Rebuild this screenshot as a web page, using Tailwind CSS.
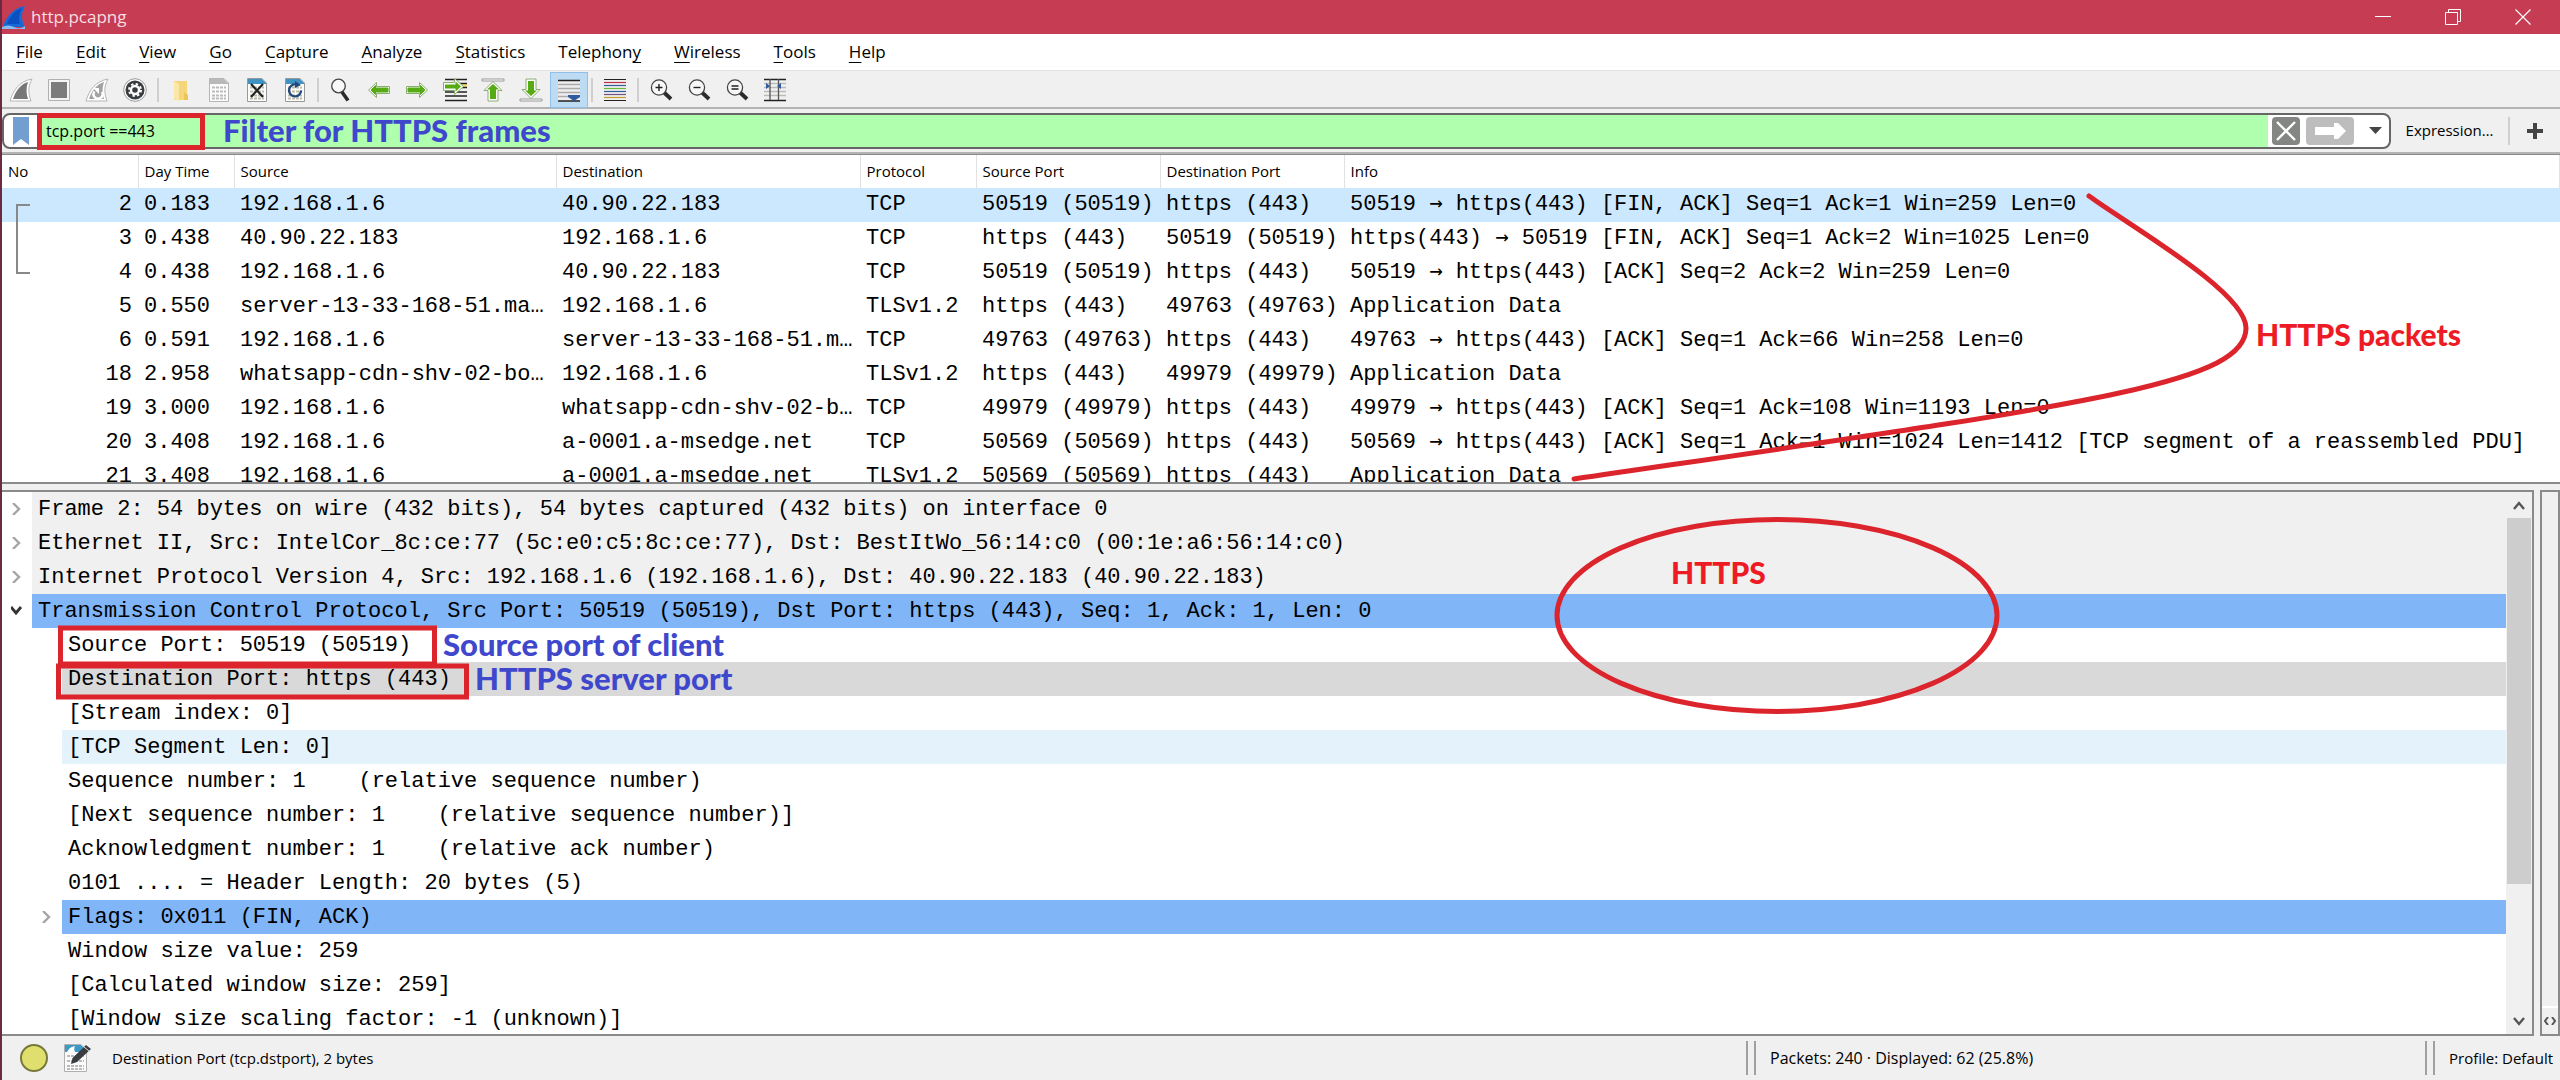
<!DOCTYPE html>
<html lang="en">
<head>
    <meta charset="UTF-8">
    <meta name="viewport" content="width=device-width, initial-scale=1.0">
    <title>http.pcapng</title>
    <script src="https://cdn.jsdelivr.net/npm/@tailwindcss/browser@4"></script>
</head>
<body class="relative h-screen overflow-hidden flex flex-col border-l-2 border-[#6b2a40] bg-[#f0f0f0] text-black font-['Open_Sans',sans-serif] text-[15px]">

    <!-- title bar -->
    <header class="h-[34px] shrink-0 flex items-center pr-[2px] bg-[#c63c53] text-white">
        <svg class="w-6 h-6 shrink-0" viewBox="0 0 24 24">
            <path d="M1 22C4 12 11 3 23 1C19 8 19 15 23 22Z" fill="#1769d8"/>
            <path d="M5 19C8 11 13 5 20 3C17 9 16 14 18 19Z" fill="#0b4fc0"/>
            <path d="M0 22Q6 19 12 22T23 21V24H0Z" fill="#86bdf3"/>
        </svg>
        <h1 class="ml-[5px] text-[17px] text-[#f8dfe3]">http.pcapng</h1>
        <div class="ml-auto flex">
            <button aria-label="Minimize" class="w-[70px] h-[34px] flex items-center justify-center">
                <svg class="w-4 h-4" viewBox="0 0 16 16" stroke="#fff"><path d="M0 7.500H16"/></svg>
            </button>
            <button aria-label="Restore" class="w-[70px] h-[34px] flex items-center justify-center">
                <svg class="w-4 h-4" viewBox="0 0 16 16" stroke="#fff" fill="none"><path d="M.5 3.500H12.500V15.500H.5ZM3.500 3.500V.5H15.500V12.500H12.500"/></svg>
            </button>
            <button aria-label="Close" class="w-[70px] h-[34px] flex items-center justify-center">
                <svg class="w-4 h-4" viewBox="0 0 16 16" stroke="#fff" stroke-width="1.200"><path d="M.5.5L15.500 15.500M15.500.5L.5 15.500"/></svg>
            </button>
        </div>
    </header>

    <!-- menu -->
    <nav class="h-[36px] shrink-0 flex items-center gap-[33px] pl-[14px] bg-white text-[17px] [&_u]:underline-offset-4">
        <button><u>F</u>ile</button>
        <button><u>E</u>dit</button>
        <button><u>V</u>iew</button>
        <button><u>G</u>o</button>
        <button><u>C</u>apture</button>
        <button><u>A</u>nalyze</button>
        <button><u>S</u>tatistics</button>
        <button>Telephon<u>y</u></button>
        <button><u>W</u>ireless</button>
        <button><u>T</u>ools</button>
        <button><u>H</u>elp</button>
    </nav>

    <!-- toolbar -->
    <div class="h-[39px] shrink-0 flex items-start pt-px border-t border-[#e3e3e3] border-b-2 border-b-[#b4b4b4] [&_button]:w-[38px] [&_button]:h-[36px] [&_button]:flex [&_button]:items-center [&_button]:justify-center [&_svg]:w-6 [&_svg]:h-6">
        <button aria-label="Start capture">
            <svg viewBox="0 0 24 24"><path d="M1 23C4 12 11 3 23 1C19 8 19 15 22 23Z" fill="#fff" stroke="#b5b5b5"/><path d="M4 21C7 12 12 6 19 4C17 10 17 15 19 21Z" fill="#777"/></svg>
        </button>
        <button aria-label="Stop capture">
            <svg viewBox="0 0 24 24"><path d="M1.500 1.500H22.500V22.500H1.500Z" fill="#f4f4f4" stroke="#b0b0b0"/><path d="M4 4H20V20H4Z" fill="#7c7c7c"/></svg>
        </button>
        <button aria-label="Restart capture">
            <svg viewBox="0 0 24 24"><path d="M1 23C4 12 11 3 23 1C19 8 19 15 22 23Z" fill="#fff" stroke="#b5b5b5"/><path d="M4 21C7 12 12 6 19 4C17 10 17 15 19 21Z" fill="#a2a2a2"/><path d="M9.500 13.500A4.500 4.500 0 1 0 17 14" fill="none" stroke="#fff" stroke-width="2.500"/><path d="M8 10H14V16Z" fill="#fff"/></svg>
        </button>
        <button aria-label="Capture options">
            <svg viewBox="0 0 24 24"><circle cx="12" cy="12" r="11.300" fill="#fff" stroke="#999"/><circle cx="12" cy="12" r="9.500" fill="#3a3d40"/><circle cx="12" cy="12" r="4" fill="none" stroke="#fff" stroke-width="2.400"/><circle cx="12" cy="12" r="6" fill="none" stroke="#fff" stroke-width="2" stroke-dasharray="2.400 2.312"/></svg>
        </button>
        <span class="w-2 h-6 mt-[6px] flex justify-center"><i class="w-[2px] h-full bg-[#cfcfcf]"></i></span>
        <button aria-label="Open">
            <svg viewBox="0 0 24 24"><path d="M5 3H18V22H5Z" fill="#f6d67a"/><path d="M5 3L10 6V23L5 21Z" fill="#fbe7a6"/><path d="M15 14L19 17V22H15Z" fill="#eec55a"/></svg>
        </button>
        <button aria-label="Save">
            <svg viewBox="0 0 24 24"><path d="M2.500.5H17L21.500 5V23.500H2.500Z" fill="#fcfcfc" stroke="#b5b5b5"/><path d="M3 1H17L21 5V6H3Z" fill="#b9b9b9"/><path d="M5 9.500H19M5 13.500H19M5 17.500H19M5 20.500H19" stroke="#bbb" stroke-width="2" stroke-dasharray="3 1"/></svg>
        </button>
        <button aria-label="Close file">
            <svg viewBox="0 0 24 24"><path d="M2.500.5H17L21.500 5V23.500H2.500Z" fill="#fcfcfa" stroke="#999"/><path d="M3 1H17L21 5V6H3Z" fill="#3f93c2"/><path d="M5 9.500H19M5 13.500H19M5 17.500H19M5 20.500H19" stroke="#bcbcae" stroke-width="2" stroke-dasharray="3 1"/><path d="M6 6L18 19M18 6L6 19" stroke="#222" stroke-width="2.200"/></svg>
        </button>
        <button aria-label="Reload">
            <svg viewBox="0 0 24 24"><path d="M2.500.5H17L21.500 5V23.500H2.500Z" fill="#fcfcfa" stroke="#999"/><path d="M3 1H17L21 5V6H3Z" fill="#3f93c2"/><path d="M5 9.500H19M5 13.500H19M5 17.500H19M5 20.500H19" stroke="#bcbcae" stroke-width="2" stroke-dasharray="3 1"/><path d="M13 6.500A6 6 0 1 0 18 12.500" fill="none" stroke="#23497f" stroke-width="2.400"/><path d="M12 3L18 7L12 10Z" fill="#23497f"/></svg>
        </button>
        <span class="w-2 h-6 mt-[6px] flex justify-center"><i class="w-[2px] h-full bg-[#cfcfcf]"></i></span>
        <button aria-label="Find">
            <svg viewBox="0 0 24 24"><circle cx="9.500" cy="8" r="6.800" fill="#f8f8f8" stroke="#444" stroke-width="1.300"/><path d="M13 14L19 22.500" stroke="#2b2b2b" stroke-width="3.600"/></svg>
        </button>
        <button aria-label="Back">
            <svg viewBox="0 0 24 24"><path d="M1.500 12L9.500 4.500V8.500H22.500V15.500H9.500V19.500Z" fill="#fff" stroke="#8aac72"/><path d="M4 12L8.500 7.500V10H21V14H8.500V16.500Z" fill="#56ab14" stroke="#56ab14"/></svg>
        </button>
        <button aria-label="Forward">
            <svg viewBox="0 0 24 24"><path d="M22.500 12L14.500 4.500V8.500H1.500V15.500H14.500V19.500Z" fill="#fff" stroke="#8aac72"/><path d="M20 12L15.500 7.500V10H3V14H15.500V16.500Z" fill="#56ab14" stroke="#56ab14"/></svg>
        </button>
        <button aria-label="Go to packet">
            <svg viewBox="0 0 24 24"><path d="M12 5H24V10H12Z" fill="#f8e27c"/><path d="M2 1.500H24M14 5.500H24M14 9.500H24M2 14H24M2 18H24M2 22.500H24" stroke="#222" stroke-width="1.600"/><path d="M20.500 8.500L11.500 .5V4.500H.5V12.500H11.500V16.500Z" fill="#fff" stroke="#8aac72"/><path d="M18 8.500L12.500 3.500V6.500H2V10.500H12.500V13.500Z" fill="#56ab14"/></svg>
        </button>
        <button aria-label="First packet">
            <svg viewBox="0 0 24 24"><path d="M1 1H23V3H1Z" fill="#fff" stroke="#999"/><path d="M12 3.500L21 12.500H17V23H7V12.500H3Z" fill="#fff" stroke="#8aac72"/><path d="M12 6L18 11.500H15V21H9V11.500H6Z" fill="#56ab14"/></svg>
        </button>
        <button aria-label="Last packet">
            <svg viewBox="0 0 24 24"><path d="M1 21H23V23H1Z" fill="#fff" stroke="#999"/><path d="M12 20.500L21 11.500H17V1H7V11.500H3Z" fill="#fff" stroke="#8aac72"/><path d="M12 18L18 12.500H15V3H9V12.500H6Z" fill="#56ab14"/></svg>
        </button>
        <button aria-label="Auto scroll" class="bg-[#bddcf4] border border-[#90c0e8]">
            <svg viewBox="0 0 24 24"><path d="M1 3H23V23H1Z" fill="#eee"/><path d="M1 6.500H23M1 10.500H23M1 14.500H23M1 18.500H23" stroke="#aaa" stroke-width="1.500"/><path d="M1 2.500H23M1 23H23" stroke="#222" stroke-width="1.600"/><path d="M11 17H23V19L17 23L11 19Z" fill="#2f5c9e"/></svg>
        </button>
        <span class="w-2 h-6 mt-[6px] flex justify-center"><i class="w-[2px] h-full bg-[#cfcfcf]"></i></span>
        <button aria-label="Colorize">
            <svg viewBox="0 0 24 24" stroke-width="1.200"><path d="M1 1.500H23M1 22.500H23" stroke="#222"/><path d="M1 4.500H23" stroke="#c33045"/><path d="M1 7.500H23" stroke="#3a5a95"/><path d="M1 10.500H23" stroke="#68b83a"/><path d="M1 13.500H23" stroke="#315a9c"/><path d="M1 16.500H23" stroke="#73507e"/><path d="M1 19.500H23" stroke="#c59a2c"/></svg>
        </button>
        <span class="w-2 h-6 mt-[6px] flex justify-center"><i class="w-[2px] h-full bg-[#cfcfcf]"></i></span>
        <button aria-label="Zoom in">
            <svg viewBox="0 0 24 24"><path d="M14.500 14L22 21" stroke="#2b2b2b" stroke-width="3.800"/><circle cx="10" cy="9.500" r="7.600" fill="#f8f8f8" stroke="#444" stroke-width="1.300"/><path d="M6.500 9.500H13.500M10 6V13" stroke="#222" stroke-width="1.400"/></svg>
        </button>
        <button aria-label="Zoom out">
            <svg viewBox="0 0 24 24"><path d="M14.500 14L22 21" stroke="#2b2b2b" stroke-width="3.800"/><circle cx="10" cy="9.500" r="7.600" fill="#f8f8f8" stroke="#444" stroke-width="1.300"/><path d="M6.500 9.500H13.500" stroke="#222" stroke-width="1.400"/></svg>
        </button>
        <button aria-label="Normal size">
            <svg viewBox="0 0 24 24"><path d="M14.500 14L22 21" stroke="#2b2b2b" stroke-width="3.800"/><circle cx="10" cy="9.500" r="7.600" fill="#f8f8f8" stroke="#444" stroke-width="1.300"/><path d="M6.500 8H13.500M6.500 11H13.500" stroke="#222" stroke-width="1.400"/></svg>
        </button>
        <button aria-label="Resize columns">
            <svg viewBox="0 0 24 24"><path d="M1 5.500H23M1 9.500H23M1 13.500H23M1 17.500H23" stroke="#bbb" stroke-width="1.500"/><path d="M1 1.500H23M1 22.500H23" stroke="#222" stroke-width="1.500"/><path d="M7 1V22M15.500 1V22" stroke="#555" stroke-width="1.300"/><path d="M3 5L7 8L3 11ZM18 5L14 8L18 11Z" fill="#2f5c9e"/></svg>
        </button>
    </div>

    <!-- display filter -->
    <div class="h-[45px] shrink-0 flex items-center border-b-2 border-[#b4b4b4]">
        <div class="flex-1 h-[36px] flex items-center border-2 border-[#666] rounded-lg bg-white overflow-hidden">
            <button aria-label="Filter bookmarks" class="w-[34px] flex justify-center">
                <svg class="w-4 h-7" viewBox="0 0 16 28"><path d="M0 0H16V28L8 22L0 28Z" fill="#739fd0"/></svg>
            </button>
            <input aria-label="Display filter" value="tcp.port ==443" class="flex-1 h-full pl-2 bg-[#afffaf] outline-none text-base">
            <button aria-label="Clear filter" class="ml-1 w-7 h-7 rounded bg-[#848684] flex items-center justify-center">
                <svg class="w-5 h-5" viewBox="0 0 20 20" stroke="#fff" stroke-width="2.400"><path d="M1 1L19 19M19 1L1 19"/></svg>
            </button>
            <button aria-label="Apply filter" class="ml-[6px] w-12 h-7 rounded bg-[#bdbdbd] flex items-center justify-center">
                <svg class="w-8 h-4" viewBox="0 0 32 16"><path d="M1 4H20V0H24L32 8L24 16H20V12H1Z" fill="#fff"/></svg>
            </button>
            <button aria-label="Recent filters" class="w-[35px] flex justify-center pl-2">
                <svg class="w-[13px] h-[7px]" viewBox="0 0 13 7"><path d="M0 0H13L6.500 7Z" fill="#444"/></svg>
            </button>
        </div>
        <button class="w-[119px] h-7 border-r-2 border-[#cfcfcf]">Expression…</button>
        <button aria-label="Add filter button" class="w-[50px] flex justify-center">
            <svg class="w-4 h-4" viewBox="0 0 16 16"><path d="M6 0H10V6H16V10H10V16H6V10H0V6H6Z" fill="#444"/></svg>
        </button>
    </div>

    <!-- packet list -->
    <main class="relative h-[330px] shrink-0 overflow-hidden bg-white border-t border-b-2 border-[#888a8c]">
        <table class="w-full table-fixed border-collapse whitespace-nowrap [&_td]:pl-[6px] [&_td]:overflow-hidden [&_th]:text-left [&_th]:font-normal [&_th]:pl-[6px] [&_th]:border-r [&_th]:border-[#e2e2e2] [&_td:first-child]:text-right [&_td:first-child]:pr-[6px] [&_i]:not-italic [&_i]:leading-none [&_i]:font-['DejaVu_Sans_Mono',monospace]">
            <colgroup>
                <col class="w-[136px]"><col class="w-[96px]"><col class="w-[322px]"><col class="w-[304px]">
                <col class="w-[116px]"><col class="w-[184px]"><col class="w-[184px]"><col>
            </colgroup>
            <thead>
                <tr class="h-[33px]"><th>No</th><th>Day Time</th><th>Source</th><th>Destination</th><th>Protocol</th><th>Source Port</th><th>Destination Port</th><th>Info</th></tr>
            </thead>
            <tbody class="font-['Liberation_Mono',monospace] text-[22px] leading-[34px]">
                <tr class="bg-[#cce8ff]"><td>2</td><td>0.183</td><td>192.168.1.6</td><td>40.90.22.183</td><td>TCP</td><td>50519 (50519)</td><td>https (443)</td><td>50519 <i>→</i> https(443) [FIN, ACK] Seq=1 Ack=1 Win=259 Len=0</td></tr>
                <tr><td>3</td><td>0.438</td><td>40.90.22.183</td><td>192.168.1.6</td><td>TCP</td><td>https (443)</td><td>50519 (50519)</td><td>https(443) <i>→</i> 50519 [FIN, ACK] Seq=1 Ack=2 Win=1025 Len=0</td></tr>
                <tr><td>4</td><td>0.438</td><td>192.168.1.6</td><td>40.90.22.183</td><td>TCP</td><td>50519 (50519)</td><td>https (443)</td><td>50519 <i>→</i> https(443) [ACK] Seq=2 Ack=2 Win=259 Len=0</td></tr>
                <tr><td>5</td><td>0.550</td><td>server-13-33-168-51.ma…</td><td>192.168.1.6</td><td>TLSv1.2</td><td>https (443)</td><td>49763 (49763)</td><td>Application Data</td></tr>
                <tr><td>6</td><td>0.591</td><td>192.168.1.6</td><td>server-13-33-168-51.m…</td><td>TCP</td><td>49763 (49763)</td><td>https (443)</td><td>49763 <i>→</i> https(443) [ACK] Seq=1 Ack=66 Win=258 Len=0</td></tr>
                <tr><td>18</td><td>2.958</td><td>whatsapp-cdn-shv-02-bo…</td><td>192.168.1.6</td><td>TLSv1.2</td><td>https (443)</td><td>49979 (49979)</td><td>Application Data</td></tr>
                <tr><td>19</td><td>3.000</td><td>192.168.1.6</td><td>whatsapp-cdn-shv-02-b…</td><td>TCP</td><td>49979 (49979)</td><td>https (443)</td><td>49979 <i>→</i> https(443) [ACK] Seq=1 Ack=108 Win=1193 Len=0</td></tr>
                <tr><td>20</td><td>3.408</td><td>192.168.1.6</td><td>a-0001.a-msedge.net</td><td>TCP</td><td>50569 (50569)</td><td>https (443)</td><td>50569 <i>→</i> https(443) [ACK] Seq=1 Ack=1 Win=1024 Len=1412 [TCP segment of a reassembled PDU]</td></tr>
                <tr><td>21</td><td>3.408</td><td>192.168.1.6</td><td>a-0001.a-msedge.net</td><td>TLSv1.2</td><td>50569 (50569)</td><td>https (443)</td><td>Application Data</td></tr>
            </tbody>
        </table>
        <!-- conversation bracket -->
        <div class="absolute left-[14px] top-[49px] w-[14px] h-[70px] border-2 border-r-0 border-[#888]"></div>
    </main>

    <!-- packet details -->
    <section class="mt-[6px] flex-1 min-h-0 flex gap-[6px]">
        <div class="flex-1 min-w-0 flex bg-white border-2 border-l-0 border-[#888a8c] overflow-hidden">
            <ul class="flex-1 min-w-0 font-['Liberation_Mono',monospace] text-[22px] leading-9 [&_li]:flex [&_li]:h-[34px] [&_button]:w-[30px] [&_button]:flex [&_button]:items-center [&_button]:justify-center [&_svg]:w-3 [&_svg]:h-3 [&_span]:flex-1 [&_span]:pl-[6px] [&_span]:whitespace-pre">
                <li><button aria-label="Expand"><svg viewBox="0 0 12 12" fill="none" stroke="#a5a5a5" stroke-width="2.400"><path d="M2 0L8 6L2 12"/></svg></button><span class="bg-[#f0f0f0]">Frame 2: 54 bytes on wire (432 bits), 54 bytes captured (432 bits) on interface 0</span></li>
                <li><button aria-label="Expand"><svg viewBox="0 0 12 12" fill="none" stroke="#a5a5a5" stroke-width="2.400"><path d="M2 0L8 6L2 12"/></svg></button><span class="bg-[#f0f0f0]">Ethernet II, Src: IntelCor_8c:ce:77 (5c:e0:c5:8c:ce:77), Dst: BestItWo_56:14:c0 (00:1e:a6:56:14:c0)</span></li>
                <li><button aria-label="Expand"><svg viewBox="0 0 12 12" fill="none" stroke="#a5a5a5" stroke-width="2.400"><path d="M2 0L8 6L2 12"/></svg></button><span class="bg-[#f0f0f0]">Internet Protocol Version 4, Src: 192.168.1.6 (192.168.1.6), Dst: 40.90.22.183 (40.90.22.183)</span></li>
                <li><button aria-label="Collapse"><svg viewBox="0 0 12 12" fill="none" stroke="#333" stroke-width="2.800"><path d="M0 2L5 8L10 2"/></svg></button><span class="bg-[#80b5f7]">Transmission Control Protocol, Src Port: 50519 (50519), Dst Port: https (443), Seq: 1, Ack: 1, Len: 0</span></li>
                <li class="pl-[60px]"><span>Source Port: 50519 (50519)</span></li>
                <li class="pl-[60px]"><span class="bg-[#d9d9d9]">Destination Port: https (443)</span></li>
                <li class="pl-[60px]"><span>[Stream index: 0]</span></li>
                <li class="pl-[60px]"><span class="bg-[#e4f2fc]">[TCP Segment Len: 0]</span></li>
                <li class="pl-[60px]"><span>Sequence number: 1    (relative sequence number)</span></li>
                <li class="pl-[60px]"><span>[Next sequence number: 1    (relative sequence number)]</span></li>
                <li class="pl-[60px]"><span>Acknowledgment number: 1    (relative ack number)</span></li>
                <li class="pl-[60px]"><span>0101 .... = Header Length: 20 bytes (5)</span></li>
                <li class="pl-[30px]"><button aria-label="Expand"><svg viewBox="0 0 12 12" fill="none" stroke="#a5a5a5" stroke-width="2.400"><path d="M2 0L8 6L2 12"/></svg></button><span class="bg-[#80b5f7]">Flags: 0x011 (FIN, ACK)</span></li>
                <li class="pl-[60px]"><span>Window size value: 259</span></li>
                <li class="pl-[60px]"><span>[Calculated window size: 259]</span></li>
                <li class="pl-[60px]"><span>[Window size scaling factor: -1 (unknown)]</span></li>
            </ul>
            <div class="w-[26px] flex flex-col items-center bg-[#f0f0f0]">
                <button aria-label="Scroll up" class="h-[26px] flex items-center"><svg class="w-3 h-3" viewBox="0 0 12 12" fill="none" stroke="#555" stroke-width="2.400"><path d="M1 10L6 4L11 10"/></svg></button>
                <div class="w-6 h-[366px] bg-[#cdcdcd]"></div>
                <button aria-label="Scroll down" class="mt-auto h-[26px] flex items-center"><svg class="w-3 h-3" viewBox="0 0 12 12" fill="none" stroke="#555" stroke-width="2.400"><path d="M1 3L6 9L11 3"/></svg></button>
            </div>
        </div>
        <div class="w-5 flex flex-col justify-end border-2 border-[#888a8c] overflow-hidden">
            <div class="h-7 flex items-center justify-center border-t-2 border-white">
                <svg class="w-[14px] h-2" viewBox="0 0 14 8" fill="none" stroke="#555" stroke-width="2"><path d="M5 0L2 4L5 8M9 0L12 4L9 8"/></svg>
            </div>
        </div>
    </section>

    <!-- status bar -->
    <footer class="h-[44px] shrink-0 flex items-center pl-[18px] text-[15px]">
        <button aria-label="Expert information"><svg class="w-7 h-7" viewBox="0 0 28 28"><circle cx="14" cy="14" r="13" fill="#dedf6c" stroke="#77783c" stroke-width="2"/></svg></button>
        <button aria-label="Capture comment" class="ml-4">
            <svg class="w-7 h-7" viewBox="0 0 28 28"><path d="M.5.5H17L22.500 6V27.500H.5Z" fill="#fbfbfb" stroke="#b0b0b0"/><path d="M1 1H17L21 5V8H1Z" fill="#3c98c6"/><path d="M3 8C5 5 6 3 11 2C10 4 10 6 11 8Z" fill="#fff"/><path d="M3 12H20M3 17H20M3 22H20M3 25H20" stroke="#bbb" stroke-width="2" stroke-dasharray="3 1"/><path d="M7 20L8.500 14L22 1L27 5L13 18Z" fill="#3a3d40"/><path d="M20 3L25 7" stroke="#ddd"/></svg>
        </button>
        <span class="ml-5">Destination Port (tcp.dstport), 2 bytes</span>
        <i class="ml-auto w-[10px] h-[34px] border-x-2 border-[#a0a0a0]"></i>
        <span class="w-[669px] pl-[14px] text-base">Packets: 240 · Displayed: 62 (25.8%)</span>
        <i class="w-[10px] h-[34px] border-x-2 border-[#a0a0a0]"></i>
        <span class="w-[125px] pl-[14px] whitespace-nowrap">Profile: Default</span>
    </footer>

    <!-- annotations drawn over the window -->
    <div class="absolute inset-0 pointer-events-none font-['Lato',sans-serif] font-black text-[31px] leading-9 whitespace-nowrap text-[#3f48cc]">
        <svg class="absolute -left-[2px] top-0 w-[2560px] h-[1080px] max-w-none" viewBox="0 0 2560 1080" fill="none" stroke="#dc242c" stroke-width="5">
            <rect x="39.500" y="115.500" width="163" height="32"/>
            <rect x="60.500" y="628" width="374" height="36"/>
            <rect x="58.500" y="666" width="408" height="31"/>
            <path d="M2089 196C2130 226 2246 292 2246 328C2246 385 2080 405 1574 479" stroke-linecap="round"/>
            <ellipse cx="1777" cy="615.500" rx="220" ry="96"/>
        </svg>
        <p class="absolute left-[221px] top-[112px]">Filter for HTTPS frames</p>
        <p class="absolute left-[441px] top-[626px]">Source port of client</p>
        <p class="absolute left-[473px] top-[660px]">HTTPS server port</p>
        <p class="absolute left-[2254px] top-[316px] text-[30px] text-[#ed1c24]">HTTPS packets</p>
        <p class="absolute left-[1669px] top-[554px] text-[30px] text-[#ed1c24]">HTTPS</p>
    </div>
</body>
</html>
